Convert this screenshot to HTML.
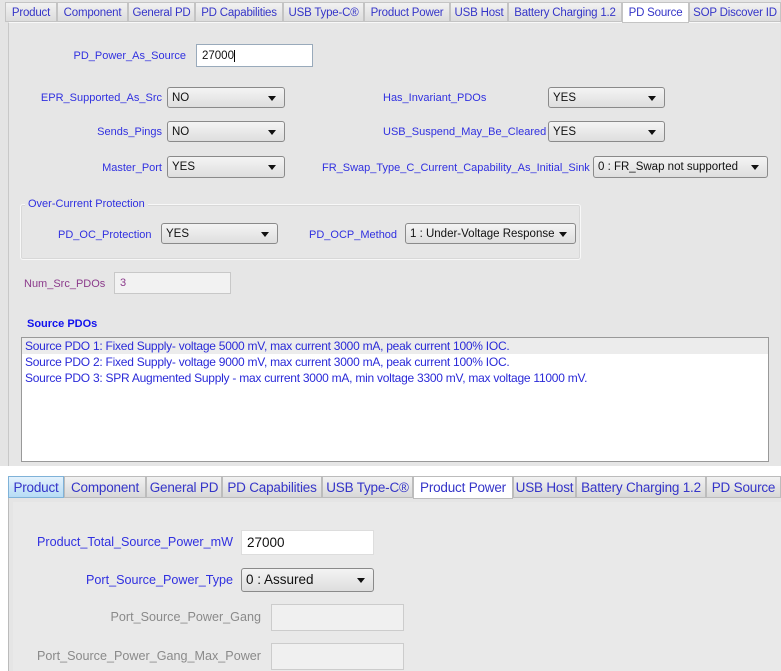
<!DOCTYPE html><html><head><meta charset="utf-8"><style>
*{box-sizing:border-box;margin:0;padding:0}
body{width:781px;height:671px;background:#fff;position:relative;overflow:hidden;font-family:"Liberation Sans",sans-serif;font-size:11px;color:#3030e0}
.a{position:absolute;white-space:nowrap}
.tab{position:absolute;top:2px;height:20px;line-height:20px;text-align:center;background:linear-gradient(#f2f2f2,#dcdcdc);border:1px solid #c4c4c4;color:#3535c8;font-size:11.5px;letter-spacing:-0.2px}
.tab2{position:absolute;top:476px;height:22px;line-height:21px;text-align:center;background:linear-gradient(#f2f2f2,#d8d8d8);border:1px solid #bcbcbc;color:#3535c8;font-size:13.5px;letter-spacing:-0.2px}
.lab{position:absolute;white-space:nowrap;text-align:right;color:#3030e0;font-size:11px}
.sel{position:absolute;border:1px solid #8a8a8a;border-radius:3px;background:linear-gradient(#f4f4f4,#dedede);color:#111;font-size:11.5px;padding-left:4px;line-height:20px}
.sel:after{content:"";position:absolute;right:8px;top:50%;margin-top:-2px;border-left:4px solid transparent;border-right:4px solid transparent;border-top:5px solid #111}
.inp{position:absolute;background:#fff;border:1px solid #aac;color:#111;padding-left:5px}
</style></head><body>
<div class="a" style="left:0;top:0;width:781px;height:466px;background:#e4e4e4"></div>
<div class="a" style="left:8px;top:22px;width:772px;height:444px;background:#e6e6e6;border-left:1px solid #c8c8c8;border-top:1px solid #f8f8f8"></div>
<div class="tab" style="left:5px;width:52px">Product</div>
<div class="tab" style="left:57px;width:71px">Component</div>
<div class="tab" style="left:128px;width:67px">General PD</div>
<div class="tab" style="left:195px;width:88px">PD Capabilities</div>
<div class="tab" style="left:283px;width:81px">USB Type-C®</div>
<div class="tab" style="left:364px;width:86px">Product Power</div>
<div class="tab" style="left:450px;width:58px">USB Host</div>
<div class="tab" style="left:508px;width:114px">Battery Charging 1.2</div>
<div class="tab" style="left:622px;width:67px;background:#fff;height:21px">PD Source</div>
<div class="tab" style="left:689px;width:92px">SOP Discover ID</div>

<div class="lab" style="right:595px;top:50px">PD_Power_As_Source</div>
<div class="inp" style="left:196px;top:44px;width:117px;height:23px;line-height:22px;border-color:#9ab;font-size:11.5px">27000<span style="border-left:1px solid #000"></span></div>

<div class="lab" style="right:619px;top:92px">EPR_Supported_As_Src</div>
<div class="sel" style="left:167px;top:87px;width:118px;height:21px">NO</div>
<div class="a" style="left:383px;top:92px">Has_Invariant_PDOs</div>
<div class="sel" style="left:548px;top:87px;width:117px;height:21px">YES</div>

<div class="lab" style="right:619px;top:126px">Sends_Pings</div>
<div class="sel" style="left:167px;top:121px;width:118px;height:21px">NO</div>
<div class="a" style="left:383px;top:126px">USB_Suspend_May_Be_Cleared</div>
<div class="sel" style="left:548px;top:121px;width:117px;height:21px">YES</div>

<div class="lab" style="right:619px;top:162px">Master_Port</div>
<div class="sel" style="left:167px;top:156px;width:118px;height:22px">YES</div>
<div class="a" style="left:322px;top:162px">FR_Swap_Type_C_Current_Capability_As_Initial_Sink</div>
<div class="sel" style="left:593px;top:156px;width:175px;height:22px">0 : FR_Swap not supported</div>

<div class="a" style="left:20px;top:204px;width:561px;height:56px;border:1px solid #f8f8f8;border-radius:3px;box-shadow:inset 0 0 0 1px #d8d8d8"></div>
<div class="a" style="left:25px;top:198px;background:#e6e6e6;padding:0 3px">Over-Current Protection</div>
<div class="a" style="left:58px;top:229px">PD_OC_Protection</div>
<div class="sel" style="left:161px;top:223px;width:117px;height:21px">YES</div>
<div class="a" style="left:309px;top:229px">PD_OCP_Method</div>
<div class="sel" style="left:405px;top:223px;width:171px;height:21px">1 : Under-Voltage Response</div>

<div class="a" style="left:24px;top:278px;color:#8b3a8b">Num_Src_PDOs</div>
<div class="a" style="left:114px;top:272px;width:117px;height:22px;background:#f2f2f2;border:1px solid #c8c8c8;color:#8b3a8b;padding-left:5px;line-height:21px">3</div>

<div class="a" style="left:27px;top:318px;font-weight:bold;color:#1010ee">Source PDOs</div>
<div class="a" style="left:21px;top:337px;width:748px;height:125px;background:#fff;border:1px solid #999;font-size:12px;color:#2a2ad8;letter-spacing:-0.25px">
<div style="background:#ececec;height:16px;line-height:16px;padding-left:3px">Source PDO 1: Fixed Supply- voltage 5000 mV, max current 3000 mA, peak current 100% IOC.</div>
<div style="height:16px;line-height:16px;padding-left:3px">Source PDO 2: Fixed Supply- voltage 9000 mV, max current 3000 mA, peak current 100% IOC.</div>
<div style="height:16px;line-height:16px;padding-left:3px">Source PDO 3: SPR Augmented Supply - max current 3000 mA, min voltage 3300 mV, max voltage 11000 mV.</div>
</div>

<div class="a" style="left:8px;top:497px;width:773px;height:174px;background:#e5e5e5;border-left:1px solid #bbb;border-top:1px solid #c8c8c8"></div>
<div class="a" style="left:13px;top:502px;width:768px;height:169px;background:#e9e9e9"></div>
<div class="tab2" style="left:8px;width:56px;background:linear-gradient(#e4f2fc,#b6dcf5);border-color:#7fb2d8">Product</div>
<div class="tab2" style="left:64px;width:82px">Component</div>
<div class="tab2" style="left:146px;width:76px">General PD</div>
<div class="tab2" style="left:222px;width:100px">PD Capabilities</div>
<div class="tab2" style="left:322px;width:91px">USB Type-C®</div>
<div class="tab2" style="left:413px;width:100px;background:#fff;height:23px">Product Power</div>
<div class="tab2" style="left:513px;width:63px">USB Host</div>
<div class="tab2" style="left:576px;width:130px">Battery Charging 1.2</div>
<div class="tab2" style="left:706px;width:75px">PD Source</div>

<div class="lab" style="right:548px;top:535px;font-size:12.6px">Product_Total_Source_Power_mW</div>
<div class="inp" style="left:241px;top:530px;width:133px;height:25px;line-height:23px;font-size:13.5px;border-color:#ddd">27000</div>
<div class="lab" style="right:548px;top:573px;font-size:12.6px">Port_Source_Power_Type</div>
<div class="sel" style="left:241px;top:568px;width:133px;height:24px;font-size:13.5px;line-height:22px">0 : Assured</div>
<div class="lab" style="right:520px;top:610px;font-size:12.6px;color:#8a8a8a">Port_Source_Power_Gang</div>
<div class="a" style="left:271px;top:604px;width:133px;height:27px;background:#f0f0f0;border:1px solid #ccc"></div>
<div class="lab" style="right:520px;top:649px;font-size:12.6px;color:#8a8a8a">Port_Source_Power_Gang_Max_Power</div>
<div class="a" style="left:271px;top:643px;width:133px;height:27px;background:#f0f0f0;border:1px solid #ccc"></div>
</body></html>
